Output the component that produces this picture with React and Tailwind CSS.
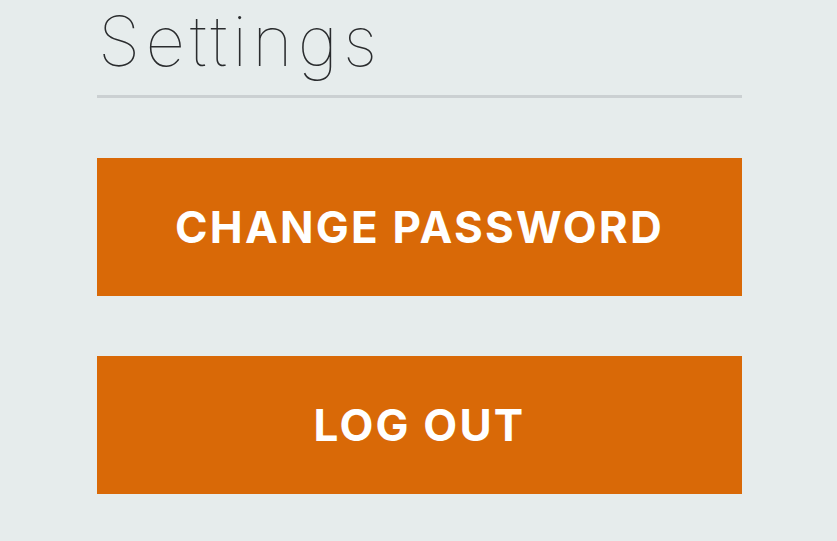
import React from "react";

const SettingsPage = () => {
  return (
    <div className="min-h-screen w-full bg-[#e6ecec] font-['Inter',sans-serif]">
      <div className="ml-[97px] w-[645px]">
        {/* Header */}
        <h1 className="pl-[1px] text-[69px] leading-[82px] font-thin text-[#2a2c2e] tracking-[0.075em]">
          Settings
        </h1>
        <div className="mt-[13px] h-[3px] bg-[#cbd0d2]" />

        {/* Actions */}
        <div className="mt-[60px] flex flex-col gap-[60px]">
          <button className="h-[138px] w-full bg-[#d96907] text-white text-[44px] font-bold tracking-[0.05em] leading-none">
            CHANGE PASSWORD
          </button>
          <button className="h-[138px] w-full bg-[#d96907] text-white text-[44px] font-bold tracking-[0.05em] leading-none">
            LOG OUT
          </button>
        </div>
      </div>
    </div>
  );
};

export default function App() {
  return <SettingsPage />;
}
